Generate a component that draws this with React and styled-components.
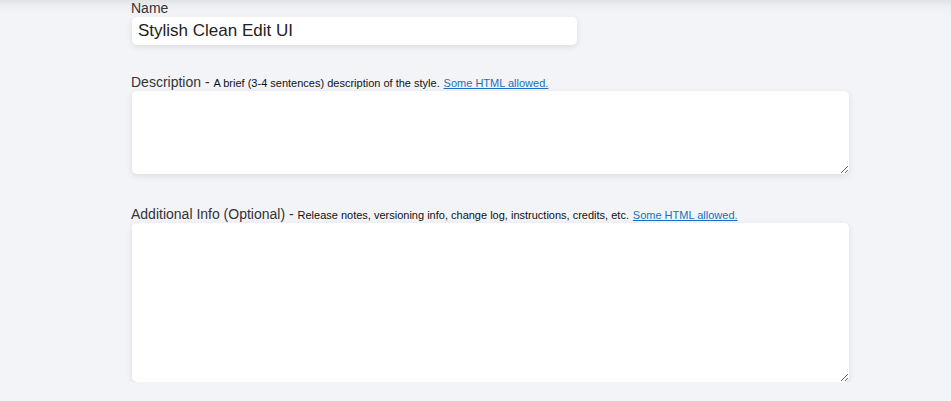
import React from 'react';
import styled, { createGlobalStyle } from 'styled-components';

const GlobalStyle = createGlobalStyle`
  html, body {
    margin: 0;
    padding: 0;
    background: linear-gradient(to bottom, #e1e2e5 0px, #eeeff2 6px, #f3f4f8 16px) no-repeat, #f3f4f8;
    font-family: Arial, "Liberation Sans", sans-serif;
  }
`;

const Form = styled.form`
  display: flex;
  flex-direction: column;
  width: 718px;
  margin-left: 131px;
`;

const Field = styled.div`
  display: flex;
  flex-direction: column;
  margin-bottom: ${({ gap }) => gap || 0}px;
`;

const Label = styled.label`
  display: block;
  font-size: 14px;
  line-height: ${({ lh }) => lh || 16}px;
  color: #333;
  white-space: nowrap;
`;

const Hint = styled.span`
  font-size: 11px;
  color: #111;
`;

const Link = styled.a`
  font-size: 11px;
  color: #1a6fc4;
  text-decoration: underline;
`;

const TextInput = styled.input`
  box-sizing: border-box;
  width: 445px;
  height: 28px;
  margin-left: 1px;
  padding: 0 6px;
  border: none;
  border-radius: 5px;
  background: #fff;
  box-shadow: 0 2px 6px rgba(0, 0, 0, 0.1);
  font-family: Arial, "Liberation Sans", sans-serif;
  font-size: 17px;
  color: #222;
  outline: none;
`;

const TextArea = styled.textarea`
  box-sizing: border-box;
  display: block;
  width: 717px;
  height: ${({ h }) => h}px;
  margin-left: 1px;
  padding: 6px;
  border: none;
  border-radius: 5px;
  background: #fff;
  box-shadow: 0 2px 6px rgba(0, 0, 0, 0.1);
  font-family: Arial, "Liberation Sans", sans-serif;
  font-size: 14px;
  resize: vertical;
  outline: none;
`;

export default function App() {
  return (
    <>
      <GlobalStyle />
      <Form>
        <Field gap={29}>
          <Label lh={17}>Name</Label>
          <TextInput defaultValue="Stylish Clean Edit UI" />
        </Field>
        <Field gap={32}>
          <Label>
            Description - <Hint>A brief (3-4 sentences) description of the style.</Hint>{' '}
            <Link href="#">Some HTML allowed.</Link>
          </Label>
          <TextArea h={83} />
        </Field>
        <Field>
          <Label>
            Additional Info (Optional) - <Hint>Release notes, versioning info, change log, instructions, credits, etc.</Hint>{' '}
            <Link href="#">Some HTML allowed.</Link>
          </Label>
          <TextArea h={159} />
        </Field>
      </Form>
    </>
  );
}
